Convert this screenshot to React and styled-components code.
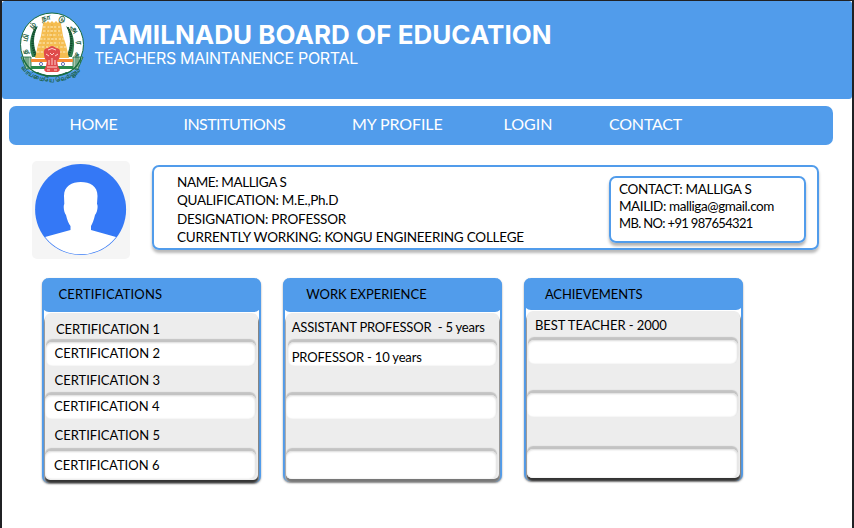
import React from "react";
import styled, { createGlobalStyle } from "styled-components";

const BLUE = "#519ceb";

const GlobalStyle = createGlobalStyle`
  * { box-sizing: border-box; }
  body { margin: 0; background: #fff; }
`;

const Page = styled.div`
  width: 854px;
  height: 528px;
  overflow: hidden;
  background: #fff;
  border: solid #202124;
  border-width: 1px 2px 0 2px;
  color: #000;
  font-family: Lato, "Open Sans", sans-serif;
`;

const Header = styled.header`
  display: flex;
  height: 98px;
  width: 850px;
  padding: 10px 0 0 16px;
  gap: 6px;
  background: ${BLUE};
  border-radius: 3px;
  color: #fff;
`;

const Heading = styled.div`
  font-family: Inter, sans-serif;
  padding-top: 8px;
  white-space: nowrap;
`;

const Title = styled.h1`
  margin: 0;
  font-size: 26px;
  line-height: 31px;
  font-weight: 700;
  letter-spacing: 0.04px;
`;

const Subtitle = styled.p`
  margin: 0;
  font-size: 16px;
  line-height: 17px;
  font-weight: 400;
  letter-spacing: -0.29px;
`;

const Nav = styled.nav`
  display: flex;
  width: 824px;
  height: 39px;
  margin: 6.5px 0 0 7px;
  padding-left: 60.5px;
  background: ${BLUE};
  border-radius: 7px;
`;

const NavLink = styled.a`
  width: ${(p) => p.$width}px;
  color: #fff;
  font-size: 16px;
  line-height: 36px;
  letter-spacing: ${(p) => p.$track || 0}px;
  white-space: nowrap;
`;

const Profile = styled.section`
  display: flex;
  align-items: flex-start;
  height: 98px;
  margin: 16.5px 0 0 30px;
`;

const Avatar = styled.div`
  width: 98px;
  height: 98px;
  background: #f5f5f5;
  border-radius: 5px;
  svg { display: block; }
`;

const Details = styled.div`
  display: flex;
  justify-content: space-between;
  width: 667px;
  height: 85px;
  margin: 4px 0 0 22px;
  padding: 8px 11px 0 23px;
  border: 2px solid ${BLUE};
  border-radius: 7px;
  box-shadow: 0 3px 3px rgba(0, 0, 0, 0.28);
`;

const Facts = styled.div`
  margin-top: -2px;
`;

const ContactBox = styled.div`
  width: 197px;
  height: 66.5px;
  margin-top: 1px;
  padding: 3px 0 0 8px;
  border: 2px solid ${BLUE};
  border-radius: 7px;
  box-shadow: 0 3px 3px rgba(0, 0, 0, 0.3);
`;

const Line = styled.div`
  height: ${(p) => p.$height}px;
  font-size: ${(p) => p.$size || 13.5}px;
  line-height: ${(p) => p.$height}px;
  letter-spacing: ${(p) => p.$track || 0}px;
  white-space: pre;
`;

const Cards = styled.section`
  display: flex;
  gap: 21.7px;
  margin: 19px 0 0 39.5px;
`;

const Card = styled.article`
  width: 219.5px;
  height: ${(p) => p.$height}px;
  background: #fff;
  border: 2px solid ${BLUE};
  border-top: 0;
  border-radius: 7px;
  box-shadow: 0 1px 2px rgba(0, 0, 0, 0.4);
`;

const CardHeader = styled.h2`
  height: ${(p) => p.$height}px;
  margin: 0 -2px;
  padding-left: ${(p) => p.$indent}px;
  background: ${BLUE};
  border-radius: 7px;
  font-size: 13px;
  font-weight: 400;
  line-height: 32px;
  letter-spacing: ${(p) => p.$track || 0}px;
`;

const List = styled.div`
  height: ${(p) => p.$height}px;
  margin: 1px 1px 0;
  background: #ededed;
  border-radius: 6px 6px 5px 5px;
  box-shadow: 0 3px 2px ${(p) => p.$shadow}, 1px 3px 1px #999, -1px 3px 1px #bbb;
`;

const Row = styled.div`
  height: ${(p) => p.$height}px;
  margin: 0 2px 0 ${(p) => p.$left || 0}px;
  padding: ${(p) => p.$top}px 0 0 ${(p) => p.$indent}px;
  border-radius: 6px;
  font-size: 13px;
  line-height: 16px;
  letter-spacing: ${(p) => p.$track || 0}px;
  white-space: pre;
  ${(p) => p.$raised && `
    background: #fff;
    box-shadow: 0 -3px 1px #c3c3c3, inset 0 1px 2px #ddd, inset -1px 0 2px #e4e4e4;
  `}
`;

const EmblemText = styled.text`
  font-family: "Noto Sans", sans-serif;
  font-size: ${(p) => p.$size}px;
  font-weight: ${(p) => p.$weight || 400};
  fill: #175c3c;
`;

function Emblem() {
  return (
    <svg width="70" height="76" viewBox="0 0 70 76">
      <defs>
        <path id="ring" d="M10.5 43A25.2 25.2 0 1 1 57.5 43" />
        <path id="motto" d="M3 57Q12 70 34 71Q56 70 65 56" />
        <clipPath id="inner"><circle cx="34" cy="33.5" r="24" /></clipPath>
      </defs>
      <circle cx="34" cy="33.5" r="31.5" fill="#fff" stroke="#176b3e" strokeWidth="1" />
      <g clipPath="url(#inner)">
        <path d="M21 17Q16 31 22 46H10V14Z M47 17Q52 31 46 46H58V14Z" fill="#fff" />
        <path d="M20 15Q12 30 20 46H14Q9 31 16 18Z M48 15Q56 30 48 46H54Q59 31 52 18Z" fill="#2f7d50" />
        <path d="M18 16Q11 31 18 45 M50 16Q57 31 50 45" fill="none" stroke="#12482c" strokeWidth="2.4" strokeDasharray="1.5 .8" />
      </g>
      <path d="M4 46H64Q60 60 50 61H18Q7 60 4 46Z" fill="#fff" />
      <path d="M3 46H13V58H8Z M55 46H65L60 58H55Z" fill="#a8c8b0" stroke="#176b3e" strokeWidth=".8" />
      <path d="M5.5 46V52 M8 46V56 M10 46V58 M58 46V58 M60 46V56 M62.5 46V52" stroke="#176b3e" strokeWidth=".7" />
      <path d="M13 48H55V51H13Z" fill="#f58b32" />
      <path d="M13 55H55V58H13Z" fill="#27894c" />
      <path d="M25 13L26 10L28 12L30 10L32 12L34 10L36 12L38 10L40 12L42 10L43 13L45 25L48 34L51 47H17L20 34L23 25Z" fill="#f5bd50" />
      <path d="M25 16H43M25 20H43M24 24H44M22 28H46M21 32H47M20 36H48M19 41H49" stroke="#fff3cf" strokeWidth=".9" strokeDasharray="2.5 1.2" />
      <path d="M34 13V33M29 15L27 44M39 15L41 44" stroke="#e3a53a" strokeWidth=".7" strokeDasharray="2 2" />
      <circle cx="23" cy="53" r="1.6" fill="none" stroke="#5262ad" strokeWidth=".9" />
      <circle cx="45" cy="53" r="1.6" fill="none" stroke="#5262ad" strokeWidth=".9" />
      <path d="M26 43Q25 37 30 37Q34 33 38 37Q43 37 42 43Q42 48 39 50L40 55L42 59L40 61H28L26 59L28 55L29 50Q26 48 26 43Z" fill="#df4b4b" />
      <path d="M30 39Q34 36 38 39M28 43L31 45M40 43L37 45M32 42L34 44L36 42M31 49V54M34 47V54M37 49V54M29 56H39M29 59H32M36 59H39" fill="none" stroke="#ffd5cf" strokeWidth="1" />
      <path d="M5 47Q12 65 34 65Q56 65 63 47" fill="none" stroke="#176b3e" strokeWidth="1.3" />
      <EmblemText $size={7.6} $weight={600}>
        <textPath href="#ring" textLength="100">த மி ழ் நா டு அ ர சு</textPath>
      </EmblemText>
      <EmblemText $size={6.6} $weight={600}>
        <textPath href="#motto" textLength="68" lengthAdjust="spacingAndGlyphs">வாய்மையே வெல்லும்</textPath>
      </EmblemText>
    </svg>
  );
}

function Portrait() {
  return (
    <svg width="98" height="98" viewBox="0 0 98 98">
      <defs><clipPath id="face"><circle cx="48.6" cy="48.5" r="44.8" /></clipPath></defs>
      <circle cx="48.6" cy="48.5" r="45.5" fill="#3478f6" />
      <path
        clipPath="url(#face)"
        d="M48.7 21C58 21 65.5 25 65.5 35L65 43C66.5 45 65 52 63 54C62 59 60 63 59 65V69L84 76L98 98H0L13 76L38.5 69V65C37 63 35 59 34 54C32 52 31 45 32.3 43L32 35C32 25 40 21 48.7 21Z"
        fill="#fff"
      />
    </svg>
  );
}

const links = [
  { label: "HOME", width: 114, track: -0.3 },
  { label: "INSTITUTIONS", width: 168.5, track: -0.55 },
  { label: "MY PROFILE", width: 151.5, track: -0.1 },
  { label: "LOGIN", width: 105.5 },
  { label: "CONTACT", width: 90, track: -0.2 },
];

const cards = [
  {
    title: "CERTIFICATIONS", indent: 17, track: 0.15, height: 204.5, header: 33.5, list: 167, shadow: "#333",
    rows: [
      { text: "CERTIFICATION 1", height: 29.5, top: 8, indent: 11.5, track: -0.1 },
      { text: "CERTIFICATION 2", height: 24, top: 3, indent: 9, left: 1, raised: true },
      { text: "CERTIFICATION 3", height: 29, top: 5.5, indent: 10 },
      { text: "CERTIFICATION 4", height: 24, top: 3, indent: 9.5, raised: true },
      { text: "CERTIFICATION 5", height: 32, top: 8, indent: 10 },
      { text: "CERTIFICATION 6", height: 28, top: 5.5, indent: 9.5, raised: true },
    ],
  },
  {
    title: "WORK EXPERIENCE", indent: 23.5, height: 204, header: 34, list: 166, shadow: "#777",
    rows: [
      { text: "ASSISTANT PROFESSOR  - 5 years", height: 29, top: 5.5, indent: 6, track: -0.2 },
      { text: "PROFESSOR - 10 years", height: 24, top: 6.5, indent: 4, left: 2, track: -0.18, raised: true },
      { text: "", height: 29 },
      { text: "", height: 24, raised: true },
      { text: "", height: 32 },
      { text: "", height: 28, raised: true },
    ],
  },
  {
    title: "ACHIEVEMENTS", indent: 21, track: -0.1, height: 202.5, header: 32, list: 167, shadow: "#333",
    rows: [
      { text: "BEST TEACHER - 2000", height: 29, top: 6, indent: 8, track: -0.05 },
      { text: "", height: 24, left: 1, raised: true },
      { text: "", height: 29 },
      { text: "", height: 24, raised: true },
      { text: "", height: 32 },
      { text: "", height: 29, raised: true },
    ],
  },
];

export default function App() {
  return (
    <>
      <GlobalStyle />
      <Page>
        <Header>
          <Emblem />
          <Heading>
            <Title>TAMILNADU BOARD OF EDUCATION</Title>
            <Subtitle>TEACHERS MAINTANENCE PORTAL</Subtitle>
          </Heading>
        </Header>
        <Nav>
          {links.map((link) => (
            <NavLink key={link.label} $width={link.width} $track={link.track}>{link.label}</NavLink>
          ))}
        </Nav>
        <Profile>
          <Avatar><Portrait /></Avatar>
          <Details>
            <Facts>
              <Line $height={18.3} $track={-0.38}>NAME: MALLIGA S</Line>
              <Line $height={18.3} $track={-0.26}>QUALIFICATION: M.E.,Ph.D</Line>
              <Line $height={18.3} $track={-0.22}>DESIGNATION: PROFESSOR</Line>
              <Line $height={18.3} $track={-0.22}>CURRENTLY WORKING: KONGU ENGINEERING COLLEGE</Line>
            </Facts>
            <ContactBox>
              <Line $height={16.8} $track={-0.28}>CONTACT: MALLIGA S</Line>
              <Line $height={16.8} $track={-0.41}>MAILID: malliga@gmail.com</Line>
              <Line $height={16.8} $size={13} $track={-0.66}>MB. NO: +91 987654321</Line>
            </ContactBox>
          </Details>
        </Profile>
        <Cards>
          {cards.map((card) => (
            <Card key={card.title} $height={card.height}>
              <CardHeader $height={card.header} $indent={card.indent} $track={card.track}>{card.title}</CardHeader>
              <List $height={card.list} $shadow={card.shadow}>
                {card.rows.map((row, i) => (
                  <Row
                    key={i}
                    $height={row.height}
                    $top={row.top || 0}
                    $indent={row.indent || 0}
                    $left={row.left}
                    $track={row.track}
                    $raised={row.raised}
                  >
                    {row.text}
                  </Row>
                ))}
              </List>
            </Card>
          ))}
        </Cards>
      </Page>
    </>
  );
}
